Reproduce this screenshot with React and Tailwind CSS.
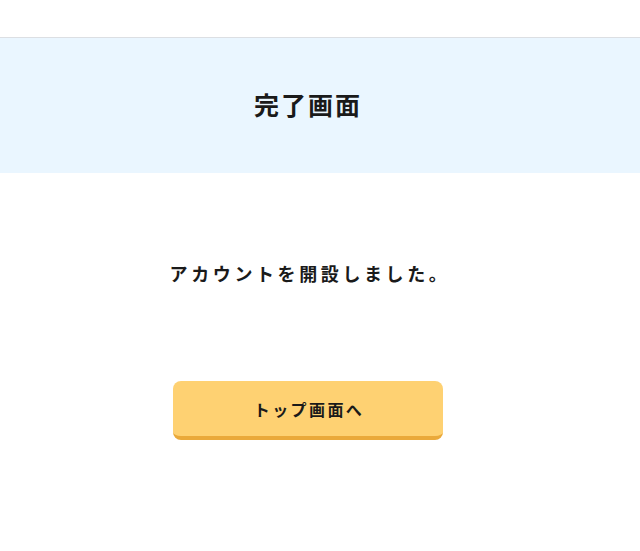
import React from 'react';

const App = () => {
    return (
        <div className="min-h-[551px] bg-white text-[#1a1a1a] font-['Noto_Sans_CJK_JP','Noto_Sans',sans-serif]">

            <header className="h-[38px] border-b border-[#dcdfe3] bg-white"></header>

            <section className="h-[135px] bg-[#eaf6ff] flex items-center justify-center pr-[24px]">
                <h1 className="text-[25px] font-bold tracking-[0.08em] pb-[2px]">完了画面</h1>
            </section>

            <main className="flex flex-col items-center pr-[24px]">
                <p className="mt-[86px] text-[18px] font-bold tracking-[0.2em] leading-[28px] pl-[4px]">アカウントを開設しました。</p>

                <button className="mt-[94px] w-[270px] h-[59px] rounded-lg bg-[#fed172] border-b-[4px] border-[#eaa93a] text-[16px] font-bold tracking-[0.15em] flex items-center justify-center pl-[2px]">
                    トップ画面へ
                </button>
            </main>

        </div>
    )
}

export default App;
